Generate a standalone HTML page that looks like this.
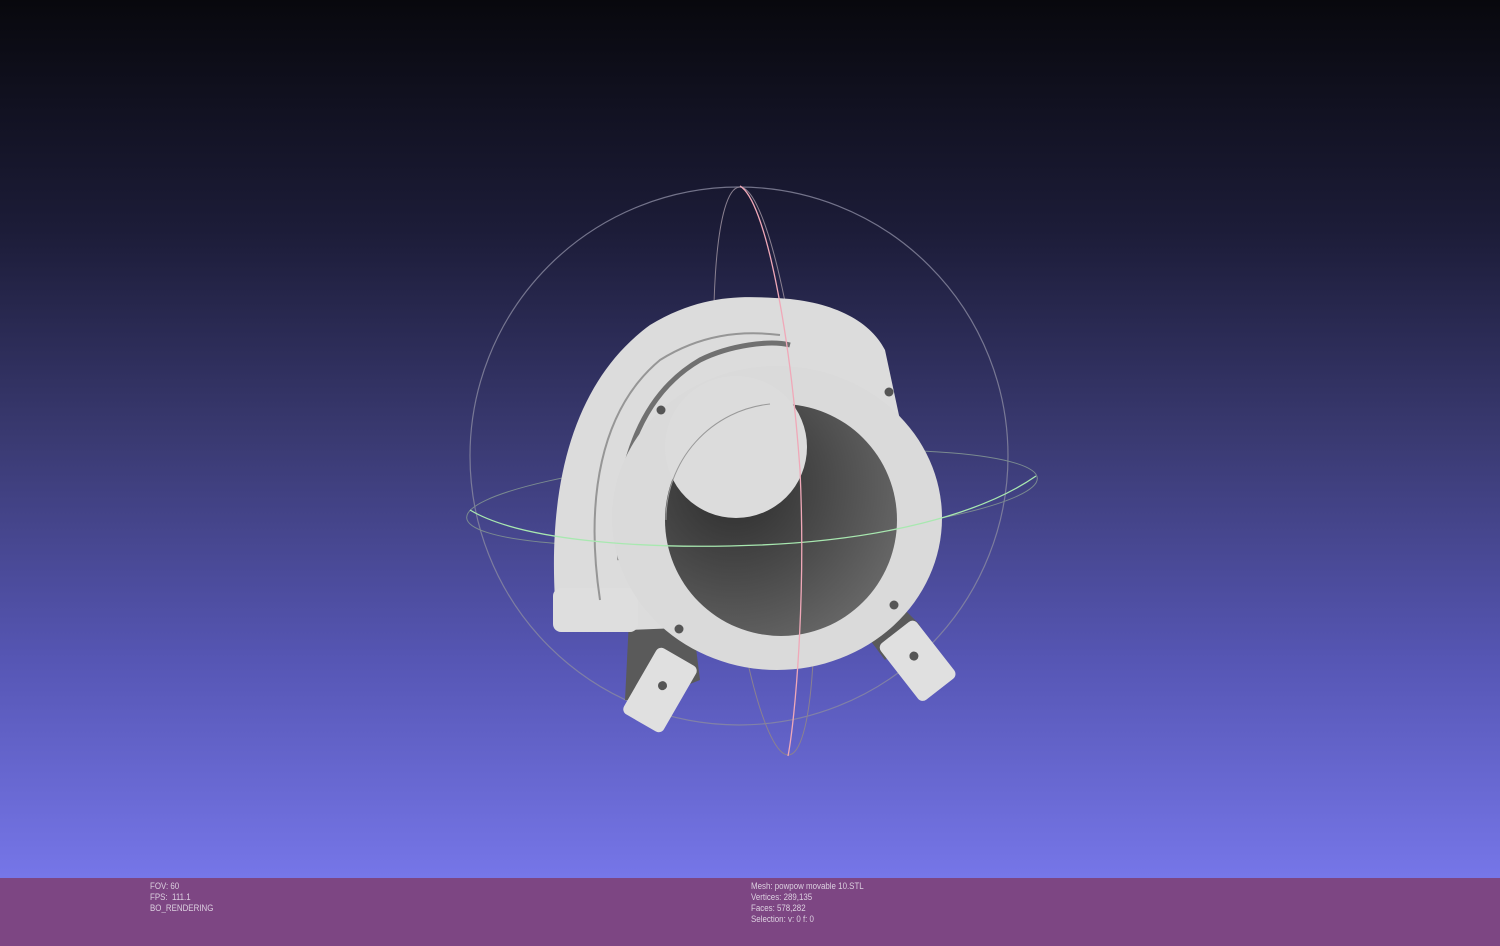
<!DOCTYPE html>
<html><head><meta charset="utf-8"><style>
html,body{margin:0;padding:0;width:1500px;height:946px;overflow:hidden}
body{position:relative;background:linear-gradient(#08080d 0px,#1c1c38 230px,#3a3a72 440px,#5656b4 660px,#7676e8 878px);font-family:"Liberation Sans",sans-serif}
#bar{position:absolute;left:0;top:878px;width:1500px;height:68px;background:#7d4683}
.t{position:absolute;color:#dcd0e0;font-size:9px;line-height:11px;transform:scaleX(0.88);transform-origin:left top}
svg{position:absolute;left:0;top:0}
</style></head><body>
<div id="bar"></div>
<div class="t" style="left:150px;top:881px">FOV: 60<br>FPS: &nbsp;111.1<br>BO_RENDERING</div>
<div class="t" style="left:751px;top:881px">Mesh: powpow movable 10.STL<br>Vertices: 289,135<br>Faces: 578,282<br>Selection: v: 0 f: 0</div>
<svg width="1500" height="878" viewBox="0 0 1500 878">
<defs>
<radialGradient id="hole" cx="0.3" cy="0.35" r="0.8"><stop offset="0" stop-color="#2c2c2c"/><stop offset="0.5" stop-color="#4a4a4a"/><stop offset="1" stop-color="#6a6a6a"/></radialGradient>
</defs>
<circle cx="739" cy="456" r="269" fill="none" stroke="#8a8aa0" stroke-width="1.2" opacity="0.8"/>
<ellipse cx="752" cy="498" rx="286" ry="44" transform="rotate(-4 752 498)" fill="none" stroke="#7a8a90" stroke-width="1"/>
<ellipse cx="764" cy="471" rx="44" ry="285" transform="rotate(-5 764 471)" fill="none" stroke="#8a8090" stroke-width="1"/>
<polygon points="630,600 690,600 700,680 650,700 625,700" fill="#5a5a5a"/>
<polygon points="870,640 905,610 920,625 885,660" fill="#5a5a5a"/>
<path d="M555,600 C548,480 575,380 650,325 C700,295 740,296 775,298 C830,300 870,320 885,350 L900,420 L880,620 L630,630 L600,620 C585,630 568,635 560,625 Z" fill="#dcdcdc"/>
<rect x="553" y="588" width="85" height="44" rx="8" fill="#dedede"/>
<path d="M600,600 C585,500 600,410 660,360 C700,335 740,330 780,335" fill="none" stroke="#777" stroke-width="2" opacity="0.7"/>
<path d="M620,560 C612,470 640,395 700,360 C730,345 770,340 790,345" fill="none" stroke="#555" stroke-width="5" opacity="0.8"/>
<g transform="rotate(30 660 690)"><rect x="637" y="652" width="46" height="76" rx="6" fill="#e0e0e0"/><circle cx="660" cy="685" r="4.5" fill="#555"/></g>
<g transform="rotate(-38 917 660)"><rect x="894" y="625" width="46" height="72" rx="6" fill="#e0e0e0"/><circle cx="917" cy="655" r="4.5" fill="#555"/></g>
<ellipse cx="777" cy="518" rx="165" ry="152" fill="#dadada"/>
<circle cx="781" cy="520" r="116" fill="url(#hole)"/>
<circle cx="736" cy="447" r="71" fill="#dcdcdc"/>
<path d="M666,520 A116,116 0 0 1 770,404" fill="none" stroke="#999" stroke-width="1"/>
<circle cx="661" cy="410" r="4.5" fill="#555"/>
<circle cx="889" cy="392" r="4.5" fill="#555"/>
<circle cx="679" cy="629" r="4.5" fill="#555"/>
<circle cx="894" cy="605" r="4.5" fill="#555"/>
<path d="M470,510 C520,540 640,550 760,545 C880,540 980,515 1036,476" fill="none" stroke="#a8e8b0" stroke-width="1.3"/>
<path d="M740,186 C765,200 790,330 800,470 C806,600 795,720 788,756" fill="none" stroke="#f0a8b8" stroke-width="1.3"/>
</svg>
</body></html>
